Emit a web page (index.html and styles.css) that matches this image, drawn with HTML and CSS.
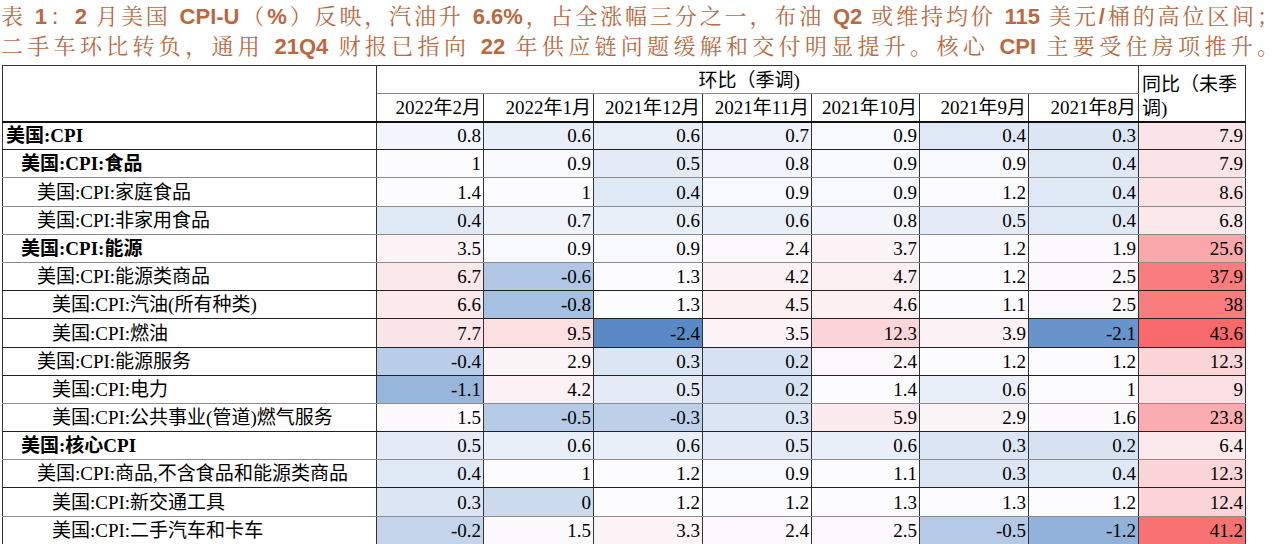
FILE: index.html
```html
<!DOCTYPE html>
<html lang="zh-CN">
<head>
<meta charset="utf-8">
<title>表1：2月美国CPI-U</title>
<link rel="stylesheet" href="styles.css">
</head>
<body>
<div class="title">
  <div class="line">表 <b>1</b>：<b>2</b> 月美国 <b>CPI-U</b>（<b>%</b>）反映，汽油升 <b>6.6%</b>，占全涨幅三分之一，布油 <b>Q2</b> 或维持均价 <b>115</b> 美元<b>/</b>桶的高位区间；</div>
  <div class="line">二手车环比转负，通用 <b>21Q4</b> 财报已指向 <b>22</b> 年供应链问题缓解和交付明显提升。核心 <b>CPI</b> 主要受住房项推升。</div>
</div>
<table class="cpi">
  <colgroup>
    <col class="c-lbl"><col class="c107"><col class="c110"><col class="c109"><col class="c109"><col class="c108"><col class="c109"><col class="c110"><col class="c107">
  </colgroup>
  <thead>
    <tr class="hr1">
      <th class="lbl" rowspan="2"></th>
      <th class="hb" colspan="7">环比（季调)</th>
      <th class="yoy" rowspan="2">同比（未季<br>调)</th>
    </tr>
    <tr class="hr2">
      <th>2022年2月</th><th>2022年1月</th><th>2021年12月</th><th>2021年11月</th><th>2021年10月</th><th>2021年9月</th><th>2021年8月</th>
    </tr>
  </thead>
  <tbody>
    <tr class="dk"><td class="l l0 b">美国:CPI</td><td class="n">0.8</td><td class="n">0.6</td><td class="n">0.6</td><td class="n">0.7</td><td class="n">0.9</td><td class="n">0.4</td><td class="n">0.3</td><td class="n">7.9</td></tr>
    <tr><td class="l l1 b">美国:CPI:食品</td><td class="n">1</td><td class="n">0.9</td><td class="n">0.5</td><td class="n">0.8</td><td class="n">0.9</td><td class="n">0.9</td><td class="n">0.4</td><td class="n">7.9</td></tr>
    <tr><td class="l l2">美国:CPI:家庭食品</td><td class="n">1.4</td><td class="n">1</td><td class="n">0.4</td><td class="n">0.9</td><td class="n">0.9</td><td class="n">1.2</td><td class="n">0.4</td><td class="n">8.6</td></tr>
    <tr><td class="l l2">美国:CPI:非家用食品</td><td class="n">0.4</td><td class="n">0.7</td><td class="n">0.6</td><td class="n">0.6</td><td class="n">0.8</td><td class="n">0.5</td><td class="n">0.4</td><td class="n">6.8</td></tr>
    <tr><td class="l l1 b">美国:CPI:能源</td><td class="n">3.5</td><td class="n">0.9</td><td class="n">0.9</td><td class="n">2.4</td><td class="n">3.7</td><td class="n">1.2</td><td class="n">1.9</td><td class="n">25.6</td></tr>
    <tr class="dk"><td class="l l2">美国:CPI:能源类商品</td><td class="n">6.7</td><td class="n">-0.6</td><td class="n">1.3</td><td class="n">4.2</td><td class="n">4.7</td><td class="n">1.2</td><td class="n">2.5</td><td class="n">37.9</td></tr>
    <tr class="dk"><td class="l l3">美国:CPI:汽油(所有种类)</td><td class="n">6.6</td><td class="n">-0.8</td><td class="n">1.3</td><td class="n">4.5</td><td class="n">4.6</td><td class="n">1.1</td><td class="n">2.5</td><td class="n">38</td></tr>
    <tr class="dk"><td class="l l3">美国:CPI:燃油</td><td class="n">7.7</td><td class="n">9.5</td><td class="n">-2.4</td><td class="n">3.5</td><td class="n">12.3</td><td class="n">3.9</td><td class="n">-2.1</td><td class="n">43.6</td></tr>
    <tr class="dk"><td class="l l2">美国:CPI:能源服务</td><td class="n">-0.4</td><td class="n">2.9</td><td class="n">0.3</td><td class="n">0.2</td><td class="n">2.4</td><td class="n">1.2</td><td class="n">1.2</td><td class="n">12.3</td></tr>
    <tr><td class="l l3">美国:CPI:电力</td><td class="n">-1.1</td><td class="n">4.2</td><td class="n">0.5</td><td class="n">0.2</td><td class="n">1.4</td><td class="n">0.6</td><td class="n">1</td><td class="n">9</td></tr>
    <tr class="dk"><td class="l l3">美国:CPI:公共事业(管道)燃气服务</td><td class="n">1.5</td><td class="n">-0.5</td><td class="n">-0.3</td><td class="n">0.3</td><td class="n">5.9</td><td class="n">2.9</td><td class="n">1.6</td><td class="n">23.8</td></tr>
    <tr><td class="l l1 b">美国:核心CPI</td><td class="n">0.5</td><td class="n">0.6</td><td class="n">0.6</td><td class="n">0.5</td><td class="n">0.6</td><td class="n">0.3</td><td class="n">0.2</td><td class="n">6.4</td></tr>
    <tr class="dk"><td class="l l2">美国:CPI:商品,不含食品和能源类商品</td><td class="n">0.4</td><td class="n">1</td><td class="n">1.2</td><td class="n">0.9</td><td class="n">1.1</td><td class="n">0.3</td><td class="n">0.4</td><td class="n">12.3</td></tr>
    <tr><td class="l l3">美国:CPI:新交通工具</td><td class="n">0.3</td><td class="n">0</td><td class="n">1.2</td><td class="n">1.2</td><td class="n">1.3</td><td class="n">1.3</td><td class="n">1.2</td><td class="n">12.4</td></tr>
    <tr><td class="l l3">美国:CPI:二手汽车和卡车</td><td class="n">-0.2</td><td class="n">1.5</td><td class="n">3.3</td><td class="n">2.4</td><td class="n">2.5</td><td class="n">-0.5</td><td class="n">-1.2</td><td class="n">41.2</td></tr>
  </tbody>
</table>
<script src="script.js"></script>
</body>
</html>
```

FILE: styles.css
```css
html, body {
  margin: 0;
  padding: 0;
  background: #ffffff;
}

.title {
  padding: 2px 1px 0 1px;
  color: #bb6840;
  font-family: "Liberation Sans", "Noto Serif CJK SC", "Noto Sans CJK SC", sans-serif;
  font-size: 22px;
  line-height: 30px;
}

.title .line {
  text-align: justify;
  text-align-last: justify;
}

.title b {
  font-weight: bold;
}

.cpi {
  border-collapse: collapse;
  table-layout: fixed;
  width: 1243px;
  margin: 3px 0 0 2px;
  font-family: "Liberation Serif", "Noto Sans CJK SC", serif;
  font-size: 19px;
  color: #000000;
  border-top: 1px solid #333333;
}

.c-lbl { width: 374px; }
.c107 { width: 107px; }
.c108 { width: 108px; }
.c109 { width: 109px; }
.c110 { width: 110px; }

.cpi th,
.cpi td {
  padding: 0 2px 0 3px;
  border-left: 1px solid #333333;
  border-right: 1px solid #333333;
  border-bottom: 1px solid #8c8c8c;
  white-space: nowrap;
  overflow: hidden;
  font-weight: normal;
}

.cpi thead tr {
  height: 28px;
}

.cpi .hr1 th {
  vertical-align: bottom;
  line-height: 24px;
}

.cpi .hb {
  text-align: center;
  padding-right: 20px;
  border-bottom: 1px solid #8c8c8c;
}

.cpi .yoy {
  text-align: left;
  vertical-align: top;
  white-space: normal;
  line-height: 26px;
  padding-top: 1px;
  border-bottom: 2px solid #111111;
}

.cpi .lbl {
  border-bottom: 2px solid #111111;
}

.cpi .hr2 th {
  text-align: right;
  vertical-align: bottom;
  line-height: 26px;
  border-bottom: 2px solid #111111;
}

.cpi tbody tr {
  height: 28.2px;
}

.cpi tbody td {
  line-height: 26px;
  vertical-align: bottom;
}

.cpi tbody tr.dk td {
  border-bottom-color: #222222;
}

.cpi .n {
  text-align: right;
}

.cpi .l {
  text-align: left;
}

.cpi .l0 { padding-left: 3px; }
.cpi .l1 { padding-left: 18px; }
.cpi .l2 { padding-left: 34px; }
.cpi .l3 { padding-left: 49px; }

.cpi .b {
  font-weight: bold;
}
```

FILE: script.js
```js
(function () {
  var MID = 1.0, MIN = -2.4, MAX = 43.6;
  var white = [252, 252, 255], red = [248, 105, 107], blue = [90, 138, 198];
  function mix(a, b, t) {
    return 'rgb(' + a.map(function (c, i) { return Math.round(c + (b[i] - c) * t); }).join(',') + ')';
  }
  var cells = document.querySelectorAll('.cpi td.n');
  for (var i = 0; i < cells.length; i++) {
    var v = parseFloat(cells[i].textContent);
    var col;
    if (v >= MID) {
      col = mix(white, red, Math.min(1, (v - MID) / (MAX - MID)));
    } else {
      col = mix(white, blue, Math.min(1, (MID - v) / (MID - MIN)));
    }
    cells[i].style.backgroundColor = col;
  }
})();
```
